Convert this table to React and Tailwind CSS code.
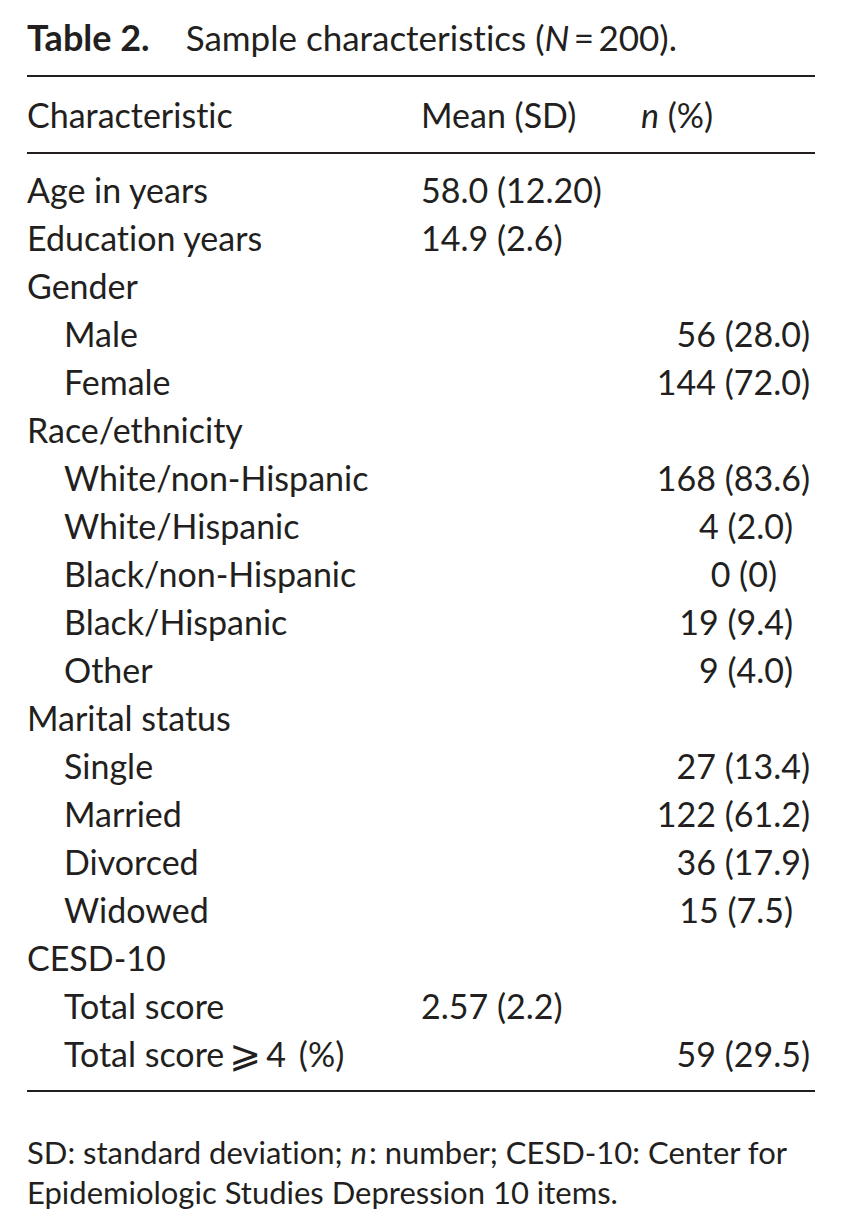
import React from 'react'

const rows = [
  { label: 'Age in years', mean: '58.0 (12.20)' },
  { label: 'Education years', mean: '14.9 (2.6)' },
  { label: 'Gender' },
  { label: 'Male', sub: true, n: '56 (28.0)' },
  { label: 'Female', sub: true, n: '144 (72.0)' },
  { label: 'Race/ethnicity' },
  { label: 'White/non-Hispanic', sub: true, n: '168 (83.6)' },
  { label: 'White/Hispanic', sub: true, n: '4 (2.0)', pad: 'pr-[22px]' },
  { label: 'Black/non-Hispanic', sub: true, n: '0 (0)', pad: 'pr-[38px]' },
  { label: 'Black/Hispanic', sub: true, n: '19 (9.4)', pad: 'pr-[22px]' },
  { label: 'Other', sub: true, n: '9 (4.0)', pad: 'pr-[22px]' },
  { label: 'Marital status' },
  { label: 'Single', sub: true, n: '27 (13.4)' },
  { label: 'Married', sub: true, n: '122 (61.2)' },
  { label: 'Divorced', sub: true, n: '36 (17.9)' },
  { label: 'Widowed', sub: true, n: '15 (7.5)', pad: 'pr-[22px]' },
  { label: 'CESD-10' },
  { label: 'Total score', sub: true, mean: '2.57 (2.2)' },
  {
    label: <>Total score<span className="font-['DejaVu_Sans'] text-[38px] leading-none mx-[5px]">⩾</span>4<span className="ml-[13px]">(%)</span></>,
    sub: true,
    n: '59 (29.5)',
  },
]

function Rule(){
  return <div className="h-[2px] bg-[#231f20]" />
}

export default function App(){
  return (
    <div className="bg-white w-[841px] h-[1215px] pl-[27px] pr-[26px] pt-[13px] text-[#231f20] font-['Lato',sans-serif] text-[34px] [font-variant-ligatures:none]">
      <h1 className="leading-[48px] text-[35px]">
        <span className="font-bold text-[36px]">Table 2.</span>
        <span className="ml-[36px]">Sample characteristics (<i>N</i>{'\u2009=\u2009'}200).</span>
      </h1>
      <div className="mt-[14px]"><Rule /></div>
      <div className="grid grid-cols-[394px_220px_1fr] h-[75px] items-center">
        <div>Characteristic</div>
        <div>Mean (SD)</div>
        <div><i>n</i> (%)</div>
      </div>
      <Rule />
      <div className="pt-[10px] pb-[14px]">
        {rows.map((r, i) => (
          <div key={i} className="grid grid-cols-[394px_220px_1fr] h-[48px] items-center">
            <div className={'flex items-center ' + (r.sub ? 'pl-[37px]' : '')}>{r.label}</div>
            <div>{r.mean}</div>
            <div className={'text-right ' + (r.pad || 'pr-[5px]')}>{r.n}</div>
          </div>
        ))}
      </div>
      <Rule />
      <p className="mt-[40px] leading-[40px] text-[31px]">
        SD: standard deviation; <i className="pr-[2px]">n</i>: number; CESD-10: Center for Epidemiologic Studies Depression 10 items.
      </p>
    </div>
  )
}
